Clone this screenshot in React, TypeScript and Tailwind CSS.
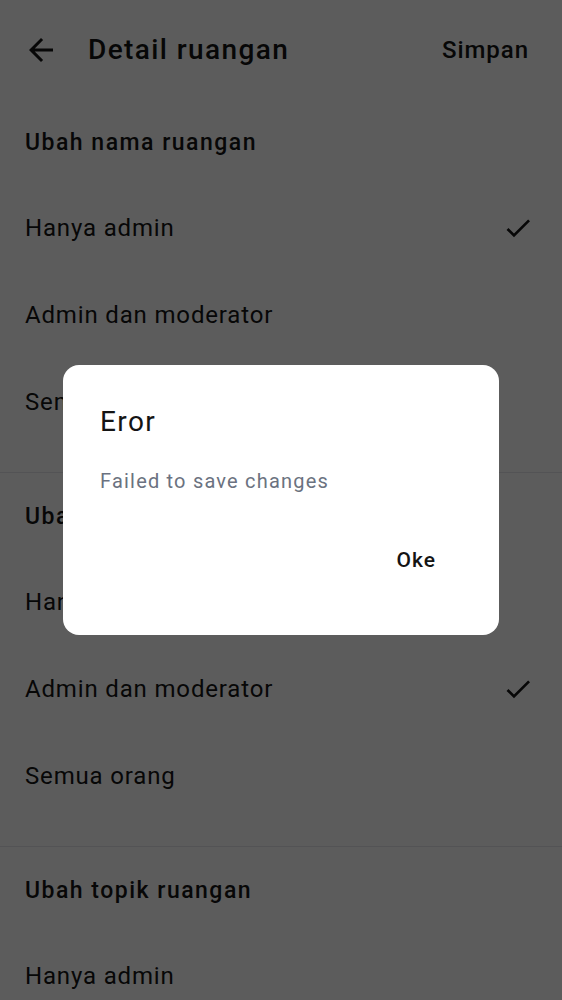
import React from "react";

type Section = {
  title: string;
  options: string[];
  selected: number;
};

const sections: Section[] = [
  {
    title: "Ubah nama ruangan",
    options: ["Hanya admin", "Admin dan moderator", "Semua orang"],
    selected: 0,
  },
  {
    title: "Ubah avatar ruangan",
    options: ["Hanya admin", "Admin dan moderator", "Semua orang"],
    selected: 1,
  },
  {
    title: "Ubah topik ruangan",
    options: ["Hanya admin", "Admin dan moderator", "Semua orang"],
    selected: 1,
  },
];

function CheckIcon() {
  return (
    <svg width="32" height="32" viewBox="0 0 24 24" fill="currentColor">
      <path d="M9 16.17L4.83 12l-1.42 1.41L9 19 21 7l-1.41-1.41z" />
    </svg>
  );
}

function SettingSection({ section, last }: { section: Section; last: boolean }) {
  return (
    <div className={last ? "" : "border-b border-[#e5e7eb] pb-[27px]"}>
      <div className="flex h-[85px] items-center px-[25px] pt-[3px] text-[23px] font-medium tracking-[0.065em] text-[#141414]">
        {section.title}
      </div>
      {section.options.map((opt, i) => (
        <div key={opt} className="flex h-[87px] items-center justify-between pl-[25px] pr-[28px]">
          <span className="text-[24px] tracking-[0.035em] text-[#141414]">{opt}</span>
          {i === section.selected && (
            <span className="text-[#141414]">
              <CheckIcon />
            </span>
          )}
        </div>
      ))}
    </div>
  );
}

export default function App() {
  return (
    <div className="relative h-[1000px] w-full overflow-hidden bg-white font-['Roboto','Noto_Sans',sans-serif]">
      {/* App bar */}
      <header className="flex h-[99px] items-center pl-[23px] pr-[33px] text-[#141414]">
        <svg width="36" height="36" viewBox="0 0 24 24" fill="currentColor">
          <path d="M20 11H7.83l5.59-5.59L12 4l-8 8 8 8 1.41-1.41L7.83 13H20v-2z" />
        </svg>
        <h1 className="ml-[29px] text-[28px] font-medium tracking-[0.05em]">Detail ruangan</h1>
        <button className="ml-auto text-[24px] font-medium tracking-[0.04em]">Simpan</button>
      </header>

      {sections.map((s, i) => (
        <SettingSection key={s.title} section={s} last={i === sections.length - 1} />
      ))}

      {/* Error dialog */}
      <div className="absolute inset-0 flex items-center justify-center bg-black/[0.64]">
        <div className="h-[270px] w-[436px] rounded-[16px] bg-white pl-[37px] pr-[63px] pt-[40px]">
          <h2 className="text-[28px] leading-[34px] tracking-[0.05em] text-[#141414]">Eror</h2>
          <p className="mt-[28px] text-[20px] leading-[28px] tracking-[0.06em] text-[#6b7280]">
            Failed to save changes
          </p>
          <div className="mt-[51px] flex justify-end">
            <button className="text-[21px] font-medium leading-[28px] tracking-[0.05em] text-[#141414]">
              Oke
            </button>
          </div>
        </div>
      </div>
    </div>
  );
}
